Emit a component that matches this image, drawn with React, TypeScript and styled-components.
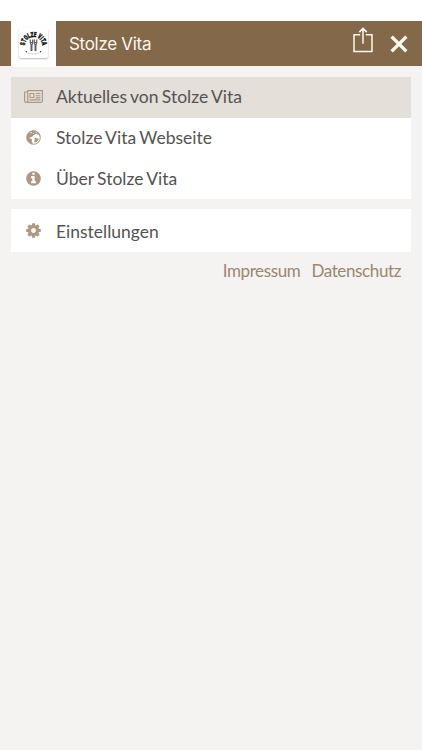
import React from "react";
import styled, { createGlobalStyle } from "styled-components";

const GlobalStyle = createGlobalStyle`
  * { box-sizing: border-box; }
  body { margin: 0; background: #f4f3f1; }
`;

const Screen = styled.div`
  min-height: 750px;
  background: #f4f3f1;
  font-family: Lato, "Liberation Sans", sans-serif;
  color: #555351;
`;

const StatusBar = styled.div`
  height: 21px;
  background: #fff;
`;

const Header = styled.header`
  display: flex;
  align-items: center;
  height: 45px;
  padding: 0 14px 0 11px;
  background: #836849;
`;

const LogoTile = styled.div`
  display: flex;
  align-items: center;
  justify-content: center;
  align-self: flex-start;
  width: 45px;
  height: 46px;
  background: #fff;
`;

const LogoCard = styled.div`
  width: 29px;
  height: 30px;
  margin-top: -2px;
  border-radius: 2px;
  background: #fff;
  box-shadow: 0 1px 2px rgba(0, 0, 0, 0.28);
  svg { display: block; overflow: visible; }
`;

const Title = styled.h1`
  flex: 1;
  margin: 0 0 0 13px;
  font: 400 17px/22px Inter, "Liberation Sans", sans-serif;
  letter-spacing: -0.3px;
  color: #fbf6ef;
`;

const HeaderButton = styled.button<{ $gap?: number; $lift?: number }>`
  display: flex;
  padding: 0;
  border: 0;
  background: none;
  color: #fdf8f0;
  margin-left: ${(p) => p.$gap ?? 0}px;
  margin-bottom: ${(p) => p.$lift ?? 0}px;
`;

const Menu = styled.nav`
  display: flex;
  flex-direction: column;
  gap: 10px;
  padding: 11px 11px 0;
`;

const Group = styled.div<{ $rowHeight: number }>`
  display: grid;
  grid-auto-rows: ${(p) => p.$rowHeight}px;
  background: #fff;
`;

const Item = styled.a<{ $active?: boolean }>`
  display: flex;
  align-items: flex-start;
  font-size: 17.5px;
  line-height: 24px;
  word-spacing: -1.1px;
  background: ${(p) => (p.$active ? "#e4dfd9" : "transparent")};
`;

const IconSlot = styled.span<{ $top: number }>`
  display: flex;
  align-items: center;
  justify-content: center;
  width: 45px;
  height: 24px;
  margin-top: ${(p) => p.$top}px;
  color: #ad9884;
`;

const Label = styled.span<{ $top: number }>`
  margin-top: ${(p) => p.$top}px;
`;

const Footer = styled.footer`
  display: flex;
  justify-content: flex-end;
  gap: 11px;
  padding: 8px 21px 0;
  font-size: 17px;
  line-height: 22px;
  letter-spacing: -0.38px;
  color: #9c8670;
`;

const Glyph = ({ d, size = 17 }: { d: string; size?: number }) => (
  <svg width={size} height={size} viewBox="0 0 1792 1792" fill="currentColor">
    <path d={d} />
  </svg>
);

const INFO =
  "M1152 1376v-160q0-14-9-23t-23-9h-96v-512q0-14-9-23t-23-9h-320q-14 0-23 9t-9 23v160q0 14 9 23t23 9h96v320h-96q-14 0-23 9t-9 23v160q0 14 9 23t23 9h448q14 0 23-9t9-23zm-128-896v-160q0-14-9-23t-23-9h-192q-14 0-23 9t-9 23v160q0 14 9 23t23 9h192q14 0 23-9t9-23zm640 416q0 209-103 385.500t-279.500 279.500-385.500 103-385.500-103-279.500-279.500-103-385.500 103-385.500 279.500-279.500 385.500-103 385.500 103 279.500 279.500 103 385.500z";
const COG =
  "M1152 896q0-106-75-181t-181-75-181 75-75 181 75 181 181 75 181-75 75-181zm512-109v222q0 12-8 23t-20 13l-185 28q-19 54-39 91 35 50 107 138 10 12 10 25t-9 23q-27 37-99 108t-94 71q-12 0-26-9l-138-108q-44 23-91 38-16 136-29 186-7 28-36 28h-222q-14 0-24.500-8.500t-11.500-21.500l-28-184q-49-16-90-37l-141 107q-10 9-25 9-14 0-25-11-126-114-165-168-7-10-7-23 0-12 8-23 15-21 51-66.500t54-70.500q-27-50-41-99l-183-27q-13-2-21-12.500t-8-23.500v-222q0-12 8-23t19-13l186-28q14-46 39-92-40-57-107-138-10-12-10-24 0-10 9-23 26-36 98.500-107.500t94.500-71.500q13 0 26 10l138 107q44-23 91-38 16-136 29-186 7-28 36-28h222q14 0 24.500 8.500t11.500 21.500l28 184q49 16 90 37l142-107q9-9 24-9 13 0 25 10 129 119 165 170 7 8 7 22 0 12-8 23-15 21-51 66.500t-54 70.500q26 50 41 98l183 28q13 2 21 12.500t8 23.500z";

const CloseIcon = () => (
  <svg width="18" height="18" viewBox="0 0 18 18" stroke="currentColor" strokeWidth="3.400">
    <path d="m1.600 1.600 14.800 14.800M16.400 1.600 1.600 16.400" />
  </svg>
);

const NewspaperIcon = () => (
  <svg width="19" height="13" viewBox="0 0 19 13" fill="none" stroke="currentColor">
    <path d="M3.500 2H.6v8.700a1.600 1.600 0 0 0 3.200 0V.6h14.600v10.200a1.500 1.500 0 0 1-1.500 1.500H2.200" strokeWidth="1.200" />
    <path d="M6 3.500h3.800v4H6zM11.600 3.500h4.800M11.600 5.700h4.800M11.600 7.900h4.800M5.400 9.900h11" strokeWidth="1.100" />
  </svg>
);

const GlobeIcon = () => (
  <svg width="15" height="15" viewBox="0 0 15 15">
    <circle cx="7.500" cy="7.500" r="6.800" fill="#fff" stroke="currentColor" strokeWidth="1" />
    <path
      fill="currentColor"
      d="M.8 5.200 3 2 6 .7l4 .1-.8 1.300 1.300.4.600 1.200-1.500.3-1 .7-1.300.6-.5 1-1.400.6-.6.8-.5-.5-.8.300.2.900 1.100.3 1 .4.300 1-.5.700.3 1.200.8 1-.2 1.100L3.300 13 1 9.800z"
    />
    <path fill="currentColor" d="m10.800 1.200 2.300 2.200 1 2.500-1.200-.4-.7-.9-1-.2-.4-1.300zM8.500 8.200l1.300-.4 1 .7 1.100-.3.800.5-.5 1.700-1.800 1.700-1.700.4-.6-1.200.6-1.300z" />
    <path fill="#fff" d="m4.200 2.700 1.200-.6.6.7-1 .7zM6.900 3.200l.9-.4.200.7-.8.300z" />
  </svg>
);

const ShareIcon = () => (
  <svg width="20" height="26" viewBox="0 0 20 26" fill="none" stroke="currentColor" strokeWidth="1.500">
    <path d="M7.200 7.700H1v16.800h18V7.700h-6.200M10 1.500v15.200M6.300 5.100 10 1.400l3.700 3.700" />
  </svg>
);

const Logo = () => (
  <svg width="29" height="30" viewBox="0 0 29 30">
    <defs>
      <path id="logo-arc" d="M5.900 17.500A8.600 8.600 0 0 1 23.100 17.500V22" />
    </defs>
    <text fill="#171717" stroke="#171717" strokeWidth=".5" fontFamily="Roboto, sans-serif" fontSize="6.900" fontWeight="900">
      <textPath href="#logo-arc" textLength="26.800" lengthAdjust="spacingAndGlyphs">STOLZE VITA</textPath>
    </text>
    <g fill="none" stroke="#62605e" strokeWidth="1.200">
      <path d="M11.300 11.500v3.500l.8 2v6M13.700 11.500v3.500l-.8 2v6M15.300 11.500v3.500l.8 2v6M17.700 11.500v3.500l-.8 2v6M11 14.500h3M15 14.500h3" />
    </g>
    <path d="M8.800 25q5.700 1.800 11.400 0" fill="none" stroke="#b5b3b1" strokeWidth=".8" strokeDasharray="1.500 .5" />
    <circle cx="7.300" cy="23.700" r=".7" fill="#333" />
    <circle cx="21.500" cy="23.700" r=".7" fill="#333" />
  </svg>
);

type MenuItem = {
  label: string;
  icon: React.ReactNode;
  active?: boolean;
  iconTop: number;
  labelTop: number;
};

const groups: { rowHeight: number; items: MenuItem[] }[] = [
  {
    rowHeight: 40.6,
    items: [
      { label: "Aktuelles von Stolze Vita", icon: <NewspaperIcon />, active: true, iconTop: 7.5, labelTop: 8 },
      { label: "Stolze Vita Webseite", icon: <GlobeIcon />, iconTop: 8.4, labelTop: 8.4 },
      { label: "Über Stolze Vita", icon: <Glyph d={INFO} />, iconTop: 8.3, labelTop: 8.8 },
    ],
  },
  {
    rowHeight: 43,
    items: [{ label: "Einstellungen", icon: <Glyph d={COG} />, iconTop: 10.2, labelTop: 11.2 }],
  },
];

export default function App() {
  return (
    <Screen>
      <GlobalStyle />
      <StatusBar />
      <Header>
        <LogoTile>
          <LogoCard>
            <Logo />
          </LogoCard>
        </LogoTile>
        <Title>Stolze Vita</Title>
        <HeaderButton aria-label="Teilen" $lift={8}>
          <ShareIcon />
        </HeaderButton>
        <HeaderButton aria-label="Schließen" $gap={17}>
          <CloseIcon />
        </HeaderButton>
      </Header>
      <Menu>
        {groups.map((group) => (
          <Group key={group.rowHeight} $rowHeight={group.rowHeight}>
            {group.items.map((item) => (
              <Item key={item.label} $active={item.active}>
                <IconSlot $top={item.iconTop}>{item.icon}</IconSlot>
                <Label $top={item.labelTop}>{item.label}</Label>
              </Item>
            ))}
          </Group>
        ))}
      </Menu>
      <Footer>
        <span>Impressum</span>
        <span>Datenschutz</span>
      </Footer>
    </Screen>
  );
}
